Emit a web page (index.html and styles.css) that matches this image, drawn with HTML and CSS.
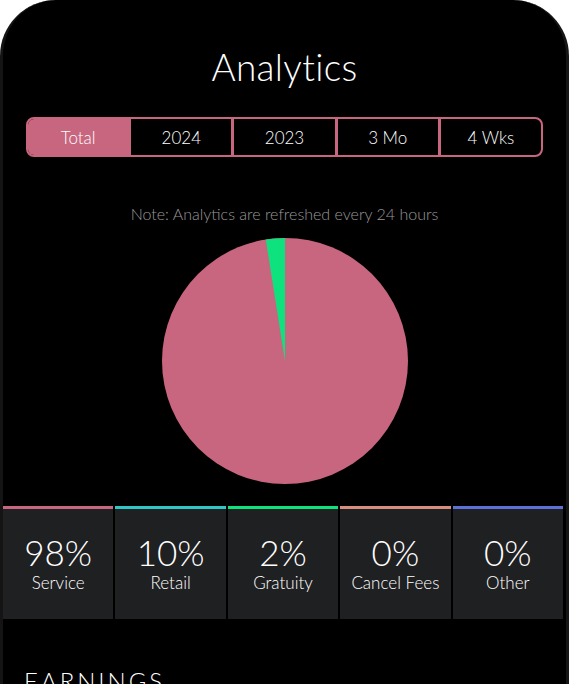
FILE: index.html
```html
<!DOCTYPE html>
<html lang="en">
<head>
	<meta charset="UTF-8">
	<title>Analytics</title>
	<link rel="stylesheet" href="styles.css">
</head>
<body>
	<div class="phone">
		<h1 class="title">Analytics</h1>

		<div class="tabs">
			<span class="tab active">Total</span>
			<span class="tab">2024</span>
			<span class="tab">2023</span>
			<span class="tab">3 Mo</span>
			<span class="tab">4 Wks</span>
		</div>

		<p class="note">Note: Analytics are refreshed every 24 hours</p>

		<div class="chart">
			<svg width="248" height="248" viewBox="0 0 248 248">
				<circle cx="124" cy="124" r="123" fill="#c8667f"/>
				<!-- gratuity slice -->
				<path d="M124 124 L124 1 A123 123 0 0 0 104.8 2.5 Z" fill="#0ee27e"/>
			</svg>
		</div>

		<div class="stats">
			<div class="stat service"><b>98%</b><span>Service</span></div>
			<div class="stat retail"><b>10%</b><span>Retail</span></div>
			<div class="stat gratuity"><b>2%</b><span>Gratuity</span></div>
			<div class="stat cancel"><b>0%</b><span>Cancel Fees</span></div>
			<div class="stat other"><b>0%</b><span>Other</span></div>
		</div>

		<h2 class="section">Earnings</h2>
	</div>
</body>
</html>
```

FILE: styles.css
```css
body{margin: 0;background: #fff;font-family: Lato, "Open Sans", sans-serif;font-weight: 300;color: #fff;}
.phone{width: 569px;height: 684px;box-sizing: border-box;background: #000;border-radius: 56px 56px 0 0;
	border-left: 3px solid #141414;border-right: 3px solid #161616;overflow: hidden;}
.title{margin: 0;padding-top: 44px;height: 52px;text-align: center;font-size: 37px;font-weight: 300;letter-spacing: 0.3px;}
.tabs{display: flex;margin: 21px 23px 0 23px;height: 36px;border: 2px solid #c8667f;border-radius: 8px;overflow: hidden;}
.tab{flex: 1;display: flex;align-items: center;justify-content: center;font-size: 17px;border-left: 3px solid #c8667f;}
.tab:first-child{border-left: 0;}
.tab.active{background: #c8667f;}
.note{margin: 47px 0 0;text-align: center;font-size: 16px;color: #999;}
.chart{display: flex;justify-content: center;margin-top: 14px;height: 248px;}
.stats{display: grid;grid-template-columns: repeat(5, 1fr);gap: 2px;margin: 21px 3px 0 0;}
.stat{height: 113px;box-sizing: border-box;background: #1f2022;border-top: 3px solid;display: flex;flex-direction: column;align-items: center;padding-top: 22px;}
.stat b{font-weight: 300;font-size: 35px;line-height: 42px;}
.stat span{font-size: 17px;line-height: 20px;}
.service{border-color: #c8667f;}
.retail{border-color: #2fc7c6;}
.gratuity{border-color: #0ee27e;}
.cancel{border-color: #d98d7c;}
.other{border-color: #5b70d8;}
.section{margin: 0;padding: 47px 0 0 21px;font-size: 24px;line-height: 30px;font-weight: 300;letter-spacing: 3px;text-transform: uppercase;}
```
